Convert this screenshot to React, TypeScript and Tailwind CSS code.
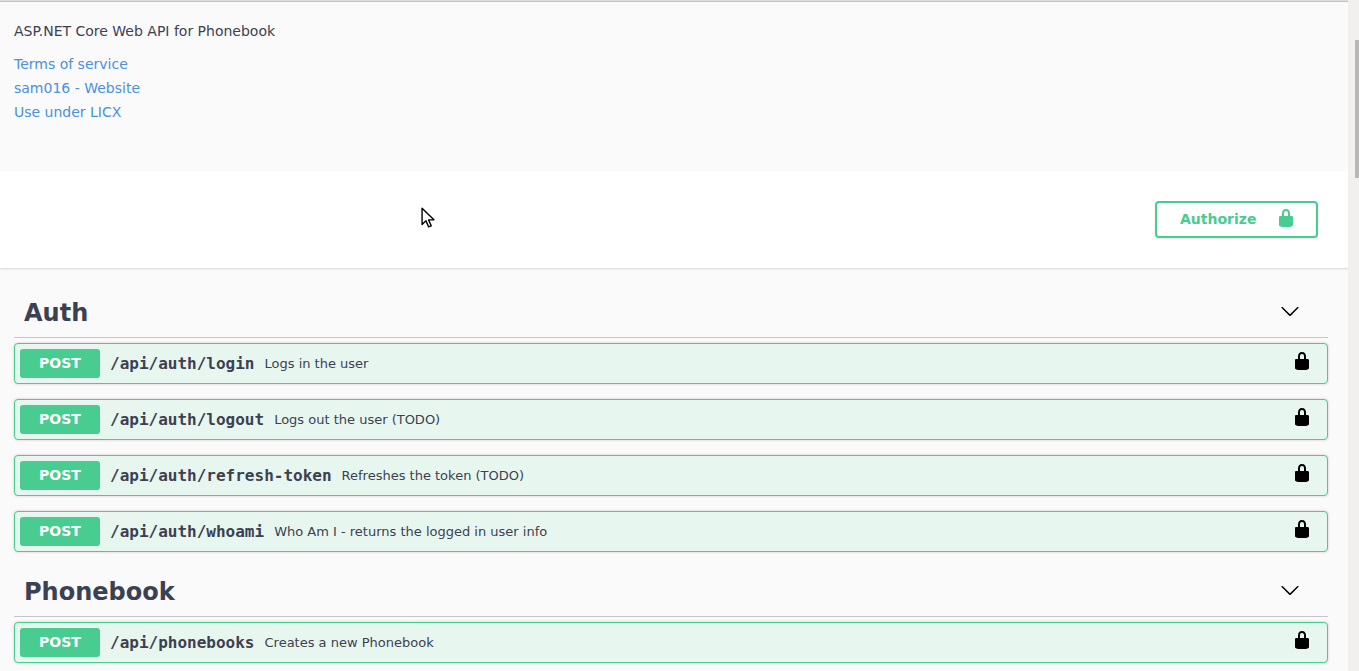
const LOCK = "M15.8 8H14V5.6C14 2.703 12.665 1 10 1 7.334 1 6 2.703 6 5.6V8H4c-.553 0-1 .646-1 1.199V17c0 .549.428 1.139.951 1.307l1.197.387C5.672 18.861 6.55 19 7.1 19h5.8c.549 0 1.428-.139 1.951-.307l1.196-.387c.524-.167.953-.757.953-1.306V9.199C17 8.646 16.352 8 15.8 8zM12 8H8V5.199C8 3.754 8.797 3 10 3c1.203 0 2 .754 2 2.199V8z";
const ARROW = "M17.418 6.109c.272-.268.709-.268.979 0s.271.701 0 .969l-7.908 7.83c-.27.268-.707.268-.979 0l-7.908-7.83c-.27-.268-.27-.701 0-.969.271-.268.709-.268.979 0L10 13.25l7.418-7.141z";

function Op({ path, desc }: { path: string; desc: string }) {
  return (
    <div className="mb-[15px] flex h-[41px] items-center rounded-[4px] border border-[#49cc90] bg-[#e8f6f0] px-[5px] shadow-[0_0_3px_rgba(0,0,0,0.19)]">
      <span className="flex h-[29px] w-[80px] shrink-0 items-center justify-center rounded-[3px] bg-[#49cc90] text-[14px] font-bold text-white">POST</span>
      <span className="pl-[10px] pr-[10px] font-['DejaVu_Sans_Mono',monospace] text-[16px] font-bold text-[#3b4151]">{path}</span>
      <span className="text-[13px] text-[#3b4151]">{desc}</span>
      <svg viewBox="0 0 20 20" className="mb-[5px] ml-auto mr-[10px] h-[20px] w-[20px] shrink-0" fill="#000"><path d={LOCK} /></svg>
    </div>
  );
}

function Tag({ name }: { name: string }) {
  return (
    <div className="mb-[5px] flex h-[50px] items-center border-b border-[#c6c6c8] pl-[10px] pr-[28px]">
      <h3 className="flex-1 text-[24px] font-bold text-[#3b4151]">{name}</h3>
      <svg viewBox="0 0 20 20" className="mb-[3px] h-[20px] w-[20px]" fill="#000"><path d={ARROW} /></svg>
    </div>
  );
}

export default function App() {
  return (
    <div className="flex h-screen overflow-hidden bg-[#fafafa] font-['DejaVu_Sans',sans-serif] text-[#3b4151]">
      <main className="relative min-w-0 flex-1 overflow-hidden">
        <section className="h-[171px] border-t border-t-[#dedede] bg-[#fafafa] px-[14px] pt-[20px] text-[14px] shadow-[inset_0_1px_0_#c2c2c2]">
          <p className="leading-[20px]">ASP.NET Core Web API for Phonebook</p>
          <div className="mt-[11px] flex flex-col items-start leading-[24px] text-[#4990e2]">
            <a>Terms of service</a>
            <a>sam016 - Website</a>
            <a>Use under LICX</a>
          </div>
        </section>
        <section className="flex h-[97px] items-center justify-end bg-white pr-[30px] shadow-[0_1px_2px_0_rgba(0,0,0,0.15)]">
          <button className="flex h-[37px] w-[163px] items-center rounded-[4px] border-2 border-[#49cc90] pl-[23px] text-[14px] font-bold text-[#49cc90] shadow-[0_1px_2px_rgba(0,0,0,0.1)]">
            <span>Authorize</span>
            <svg viewBox="0 0 20 20" className="mb-[3px] ml-auto mr-[20px] h-[20px] w-[20px]" fill="#49cc90"><path d={LOCK} /></svg>
          </button>
        </section>
        <div className="px-[20px] pl-[14px] pt-[20px]">
          <Tag name="Auth" />
          <Op path="/api/auth/login" desc="Logs in the user" />
          <Op path="/api/auth/logout" desc="Logs out the user (TODO)" />
          <Op path="/api/auth/refresh-token" desc="Refreshes the token (TODO)" />
          <Op path="/api/auth/whoami" desc="Who Am I - returns the logged in user info" />
          <Tag name="Phonebook" />
          <Op path="/api/phonebooks" desc="Creates a new Phonebook" />
        </div>
        <svg viewBox="0 0 13 19" className="absolute left-[421px] top-[207px] h-[21px] w-[14px]">
          <path d="M1 1v15l3.6-3.4 2.5 5.6 2.4-1-2.5-5.5H12z" fill="#fff" stroke="#000" strokeWidth="1.3" strokeLinejoin="round" />
        </svg>
      </main>
      <div className="flex w-[11px] shrink-0 justify-end bg-[#f1f0ef] pt-[40px]">
        <div className="h-[138px] w-[4px] bg-[#b9b7b5]" />
      </div>
    </div>
  );
}
